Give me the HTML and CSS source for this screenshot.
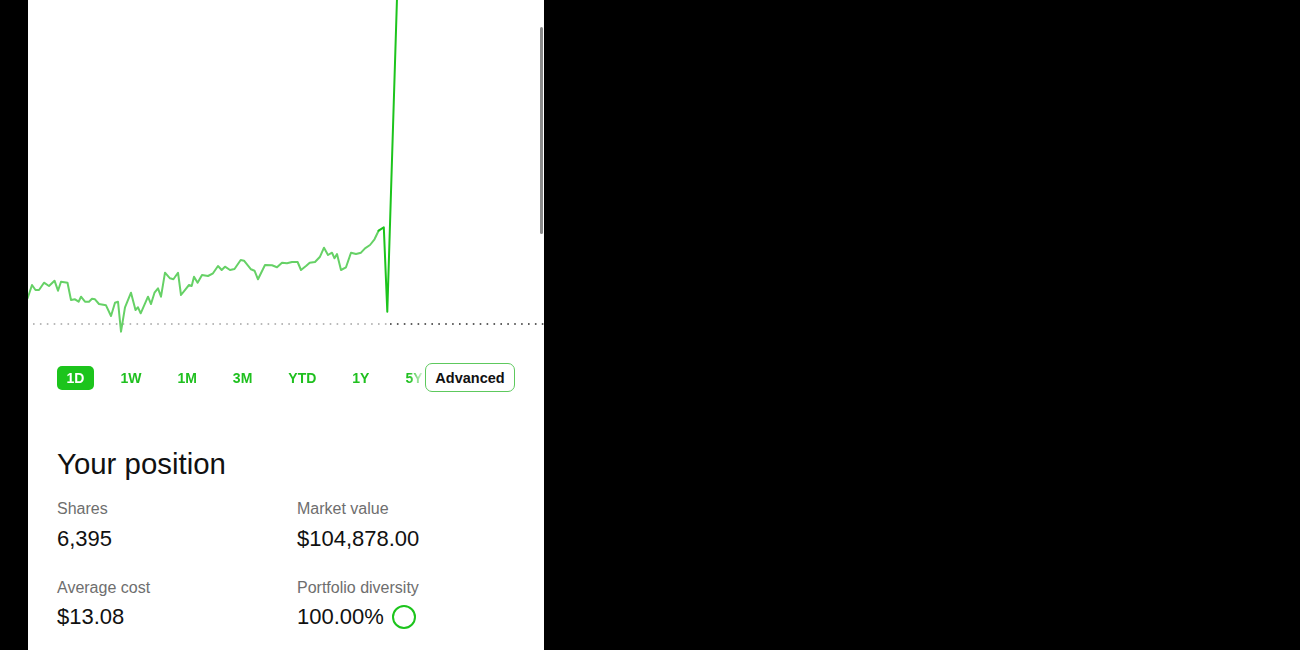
FILE: index.html
```html
<!DOCTYPE html>
<html lang="en">
<head>
<meta charset="utf-8">
<title>Your position</title>
<link rel="stylesheet" href="styles.css">
</head>
<body>
<div class="panel">
  <div class="scrollbar"></div>
  <svg class="chart" width="516" height="340" viewBox="28 0 516 340" xmlns="http://www.w3.org/2000/svg">
    <line class="base-past" x1="33" y1="324" x2="388" y2="324"/>
    <line class="base-now" x1="390" y1="324" x2="544" y2="324"/>
    <polyline class="line-past" points="27.6,298.3 32,285 35.5,290 39,290 44,282.7 49,286 54.5,280.7 58,290.7 61,281.7 67.5,282.7 71,300 75,299.3 78.6,301.7 81,296.7 85,301.7 89,301.7 92,298.7 95,299.3 99,304 106,305.3 111,316 115,302.7 118,301.7 121,331.7 125,307.3 131,292.7 135.5,310 138,307.3 140.7,313.3 148,296.7 151,304 154.5,292.7 158,288.3 161,296.7 165,272.7 170,278.3 173.4,279.3 178,272.7 181,295 185.5,289.3 189,285 191.7,286 194,276.7 197.6,282.7 202,275 208,276 213,273.3 218,266 221.7,270 225,266.7 230,270 234.5,269 240.7,260 244,260.7 251,269.3 254.5,270.7 258,279.3 265,265 272,265.3 277,267.3 282,262.7 287,263.3 292,262 297.6,262 301,270 306,266 309.7,262.7 315,262 320,256.7 324,247.7 328,255 332,252.7 334.5,258.3 337,254 341,270 346,267.3 351,252.7 356,254 361,252.7 365,248.3 370,245 374.5,239.3 378.6,230.7"/>
    <polyline class="line-now" points="378.6,230.7 383.8,227.3 387.3,311.7 397,-2"/>
  </svg>

  <div class="ranges">
    <ul class="range-list">
      <li class="range active">1D</li>
      <li class="range">1W</li>
      <li class="range">1M</li>
      <li class="range">3M</li>
      <li class="range">YTD</li>
      <li class="range">1Y</li>
      <li class="range">5Y</li>
    </ul>
    <button class="advanced">Advanced</button>
  </div>

  <section class="position">
    <h2 class="title">Your position</h2>
    <div class="stats">
      <div class="stat">
        <div class="label">Shares</div>
        <div class="value">6,395</div>
      </div>
      <div class="stat">
        <div class="label">Market value</div>
        <div class="value">$104,878.00</div>
      </div>
      <div class="stat">
        <div class="label">Average cost</div>
        <div class="value">$13.08</div>
      </div>
      <div class="stat">
        <div class="label">Portfolio diversity</div>
        <div class="value with-ring">100.00% <span class="ring"></span></div>
      </div>
    </div>
  </section>
</div>
</body>
</html>
```

FILE: styles.css
```css
html, body {
  margin: 0;
  padding: 0;
  background: #000;
}

body {
  font-family: "Liberation Sans", Arial, sans-serif;
  color: #111;
}

.panel {
  position: relative;
  margin-left: 28px;
  width: 516px;
  height: 650px;
  background: #fff;
  overflow: hidden;
}

.scrollbar {
  position: absolute;
  top: 27px;
  right: 1px;
  width: 3px;
  height: 207px;
  border-radius: 2px;
  background: #8a8a8a;
}

.chart {
  display: block;
}

.line-past {
  fill: none;
  stroke: #66d166;
  stroke-width: 2;
  stroke-linejoin: round;
  stroke-linecap: round;
}

.line-now {
  fill: none;
  stroke: #1cc41c;
  stroke-width: 2;
  stroke-linejoin: round;
  stroke-linecap: round;
}

.base-past {
  stroke: #a3a3a3;
  stroke-width: 1.6;
  stroke-dasharray: 1.6 5.3;
}

.base-now {
  stroke: #2b2b2b;
  stroke-width: 1.6;
  stroke-dasharray: 1.6 5.3;
}

.ranges {
  display: flex;
  align-items: center;
  margin: 23px 29px 0 29px;
  height: 29px;
}

.range-list {
  flex: 1;
  min-width: 0;
  list-style: none;
  margin: 0;
  padding: 0;
  display: flex;
  align-items: center;
  gap: 17px;
  height: 29px;
  overflow: hidden;
  white-space: nowrap;
  -webkit-mask-image: linear-gradient(to right, #000 calc(100% - 16px), transparent 100%);
  mask-image: linear-gradient(to right, #000 calc(100% - 16px), transparent 100%);
}

.range {
  flex: none;
  height: 24px;
  line-height: 24px;
  padding: 0 9.5px;
  border-radius: 5px;
  font-size: 14px;
  font-weight: bold;
  color: #1fc01f;
}

.range.active {
  background: #1cc41c;
  color: #fff;
}

.range:last-child {
  padding-right: 0;
}

.advanced {
  flex: none;
  height: 29px;
  width: 90px;
  padding: 0;
  border: 1.5px solid #5dc95d;
  border-radius: 7px;
  background: #fff;
  font-family: inherit;
  font-size: 14.5px;
  font-weight: bold;
  color: #111;
}

.position {
  padding: 0 29px;
  margin-top: 55px;
}

.title {
  margin: 0;
  font-size: 29.4px;
  line-height: 33px;
  font-weight: normal;
  color: #111;
}

.stats {
  margin-top: 19px;
  display: grid;
  grid-template-columns: 240px 1fr;
  row-gap: 25px;
}

.label {
  font-size: 16px;
  line-height: 20px;
  color: #6e6e6e;
}

.value {
  margin-top: 5.5px;
  font-size: 22px;
  line-height: 28px;
  color: #111;
}

.with-ring {
  display: flex;
  align-items: center;
  gap: 8px;
}

.ring {
  display: inline-block;
  width: 20px;
  height: 20px;
  border: 2px solid #1cc41c;
  border-radius: 50%;
}
```
